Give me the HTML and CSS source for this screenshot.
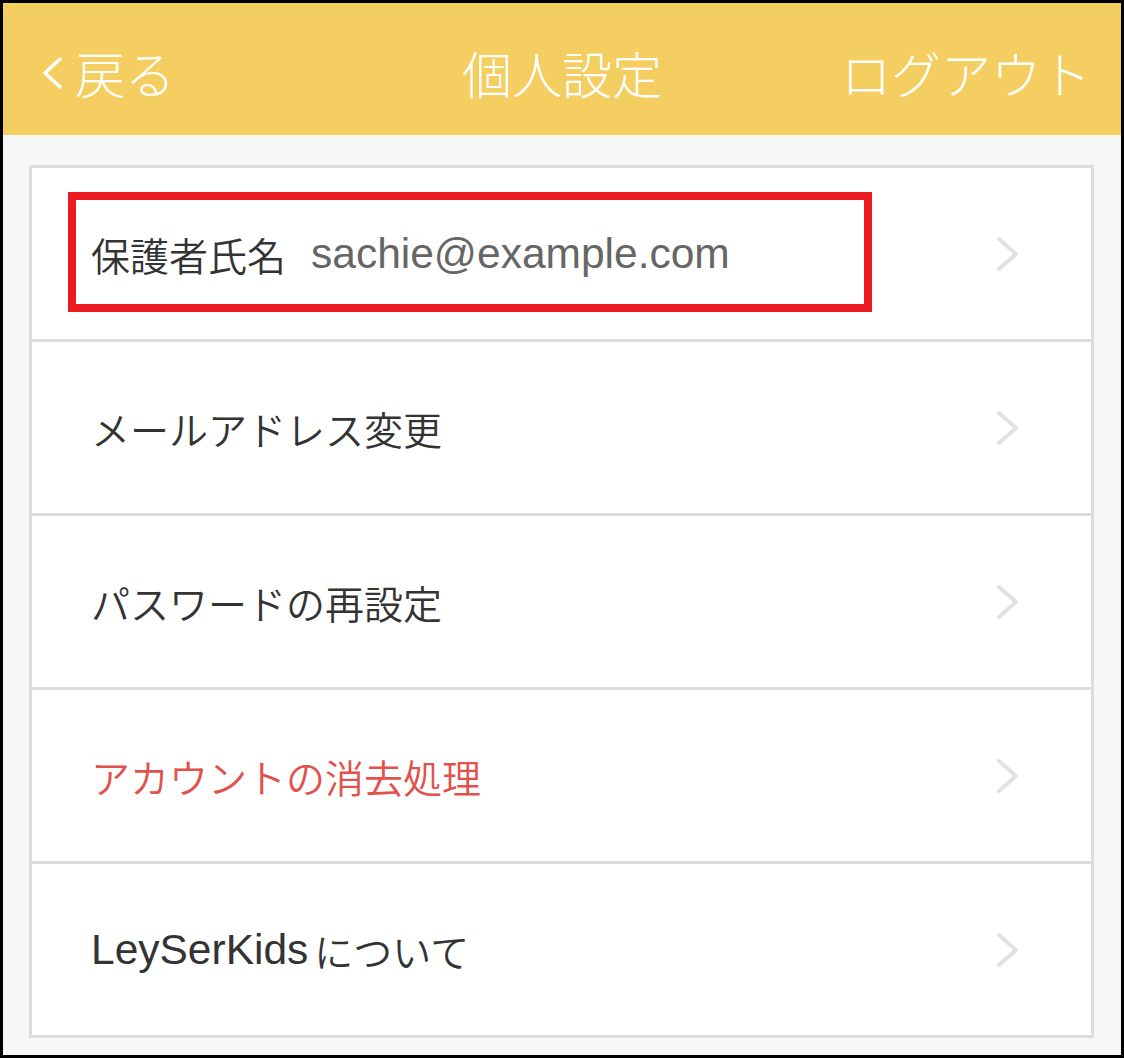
FILE: index.html
```html
<!DOCTYPE html>
<html lang="ja">
<head>
    <meta charset="UTF-8">
    <meta name="viewport" content="width=device-width, initial-scale=1.0">
    <title>個人設定</title>
    <link rel="stylesheet" href="styles.css">
</head>
<body>
    <div class="frame">
        <header class="nav">
            <a class="nav-back">
                <svg class="back-icon" viewBox="0 0 22 32" width="22" height="32">
                    <path d="M19 2 L4 16 L19 30" fill="none" stroke="#fff" stroke-width="3.5" stroke-linecap="round" stroke-linejoin="round"/>
                </svg>
                <span>戻る</span>
            </a>
            <h1 class="nav-title">個人設定</h1>
            <a class="nav-logout">ログアウト</a>
        </header>

        <main class="content">
            <ul class="menu">
                <li class="menu-item">
                    <span class="label">保護者氏名</span><span class="latin email">sachie@example.com</span>
                    <svg class="chevron" viewBox="0 0 24 36" width="24" height="36">
                        <path d="M3 3 L20 18 L3 33" fill="none" stroke="#e1e1e1" stroke-width="4" stroke-linecap="round" stroke-linejoin="round"/>
                    </svg>
                    <!-- 注釈の赤枠 -->
                    <div class="highlight"></div>
                </li>
                <li class="menu-item">
                    <span class="label">メールアドレス変更</span>
                    <svg class="chevron" viewBox="0 0 24 36" width="24" height="36">
                        <path d="M3 3 L20 18 L3 33" fill="none" stroke="#e1e1e1" stroke-width="4" stroke-linecap="round" stroke-linejoin="round"/>
                    </svg>
                </li>
                <li class="menu-item">
                    <span class="label">パスワードの再設定</span>
                    <svg class="chevron" viewBox="0 0 24 36" width="24" height="36">
                        <path d="M3 3 L20 18 L3 33" fill="none" stroke="#e1e1e1" stroke-width="4" stroke-linecap="round" stroke-linejoin="round"/>
                    </svg>
                </li>
                <li class="menu-item danger">
                    <span class="label">アカウントの消去処理</span>
                    <svg class="chevron" viewBox="0 0 24 36" width="24" height="36">
                        <path d="M3 3 L20 18 L3 33" fill="none" stroke="#e1e1e1" stroke-width="4" stroke-linecap="round" stroke-linejoin="round"/>
                    </svg>
                </li>
                <li class="menu-item">
                    <span class="latin app-name">LeySerKids</span><span class="label">について</span>
                    <svg class="chevron" viewBox="0 0 24 36" width="24" height="36">
                        <path d="M3 3 L20 18 L3 33" fill="none" stroke="#e1e1e1" stroke-width="4" stroke-linecap="round" stroke-linejoin="round"/>
                    </svg>
                </li>
            </ul>
        </main>
    </div>
</body>
</html>
```

FILE: styles.css
```css
* {
    box-sizing: border-box;
}
body {
    margin: 0;
    font-family: "Noto Sans CJK JP", "Liberation Sans", sans-serif;
    color: #333;
}
.frame {
    width: 1124px;
    height: 1058px;
    border: 3px solid #000;
    background: #f7f7f7;
    display: flex;
    flex-direction: column;
}
.nav {
    height: 132px;
    background: #f5ce62;
    color: #fff;
    display: flex;
    align-items: center;
    justify-content: space-between;
    padding: 6px 30px 0 38px;
    position: relative;
}
.nav a {
    color: #fff;
    font-size: 50px;
    font-weight: 300;
    line-height: 1;
}
.nav-back {
    display: flex;
    align-items: center;
}
.back-icon {
    margin-right: 12px;
    margin-top: 2px;
}
.nav-title {
    position: absolute;
    left: 0;
    right: 0;
    top: 6px;
    bottom: 0;
    margin: auto;
    height: 50px;
    font-size: 50px;
    font-weight: 300;
    line-height: 1;
    text-align: center;
    pointer-events: none;
}
.content {
    flex: 1;
    padding: 30px 27px 17px 26px;
}
.menu {
    list-style: none;
    margin: 0;
    padding: 0;
    background: #fff;
    border: 3px solid #ddd;
}
.menu-item {
    position: relative;
    height: 171px;
    display: flex;
    align-items: center;
    padding: 0 71px 0 59px;
    font-size: 39px;
    font-weight: 350;
}
.menu-item + .menu-item {
    height: 174px;
    border-top: 3px solid #ddd;
}
.latin {
    font-family: "Liberation Sans", sans-serif;
    font-size: 42.5px;
    font-weight: 400;
}
.email {
    color: #666;
    margin-left: 25px;
}
.app-name {
    margin-right: 6px;
}
.danger {
    color: #e2514b;
}
.chevron {
    margin-left: auto;
}
.highlight {
    position: absolute;
    left: 36px;
    top: 24px;
    width: 804px;
    height: 120px;
    border: 8px solid #ed1c24;
}
```
